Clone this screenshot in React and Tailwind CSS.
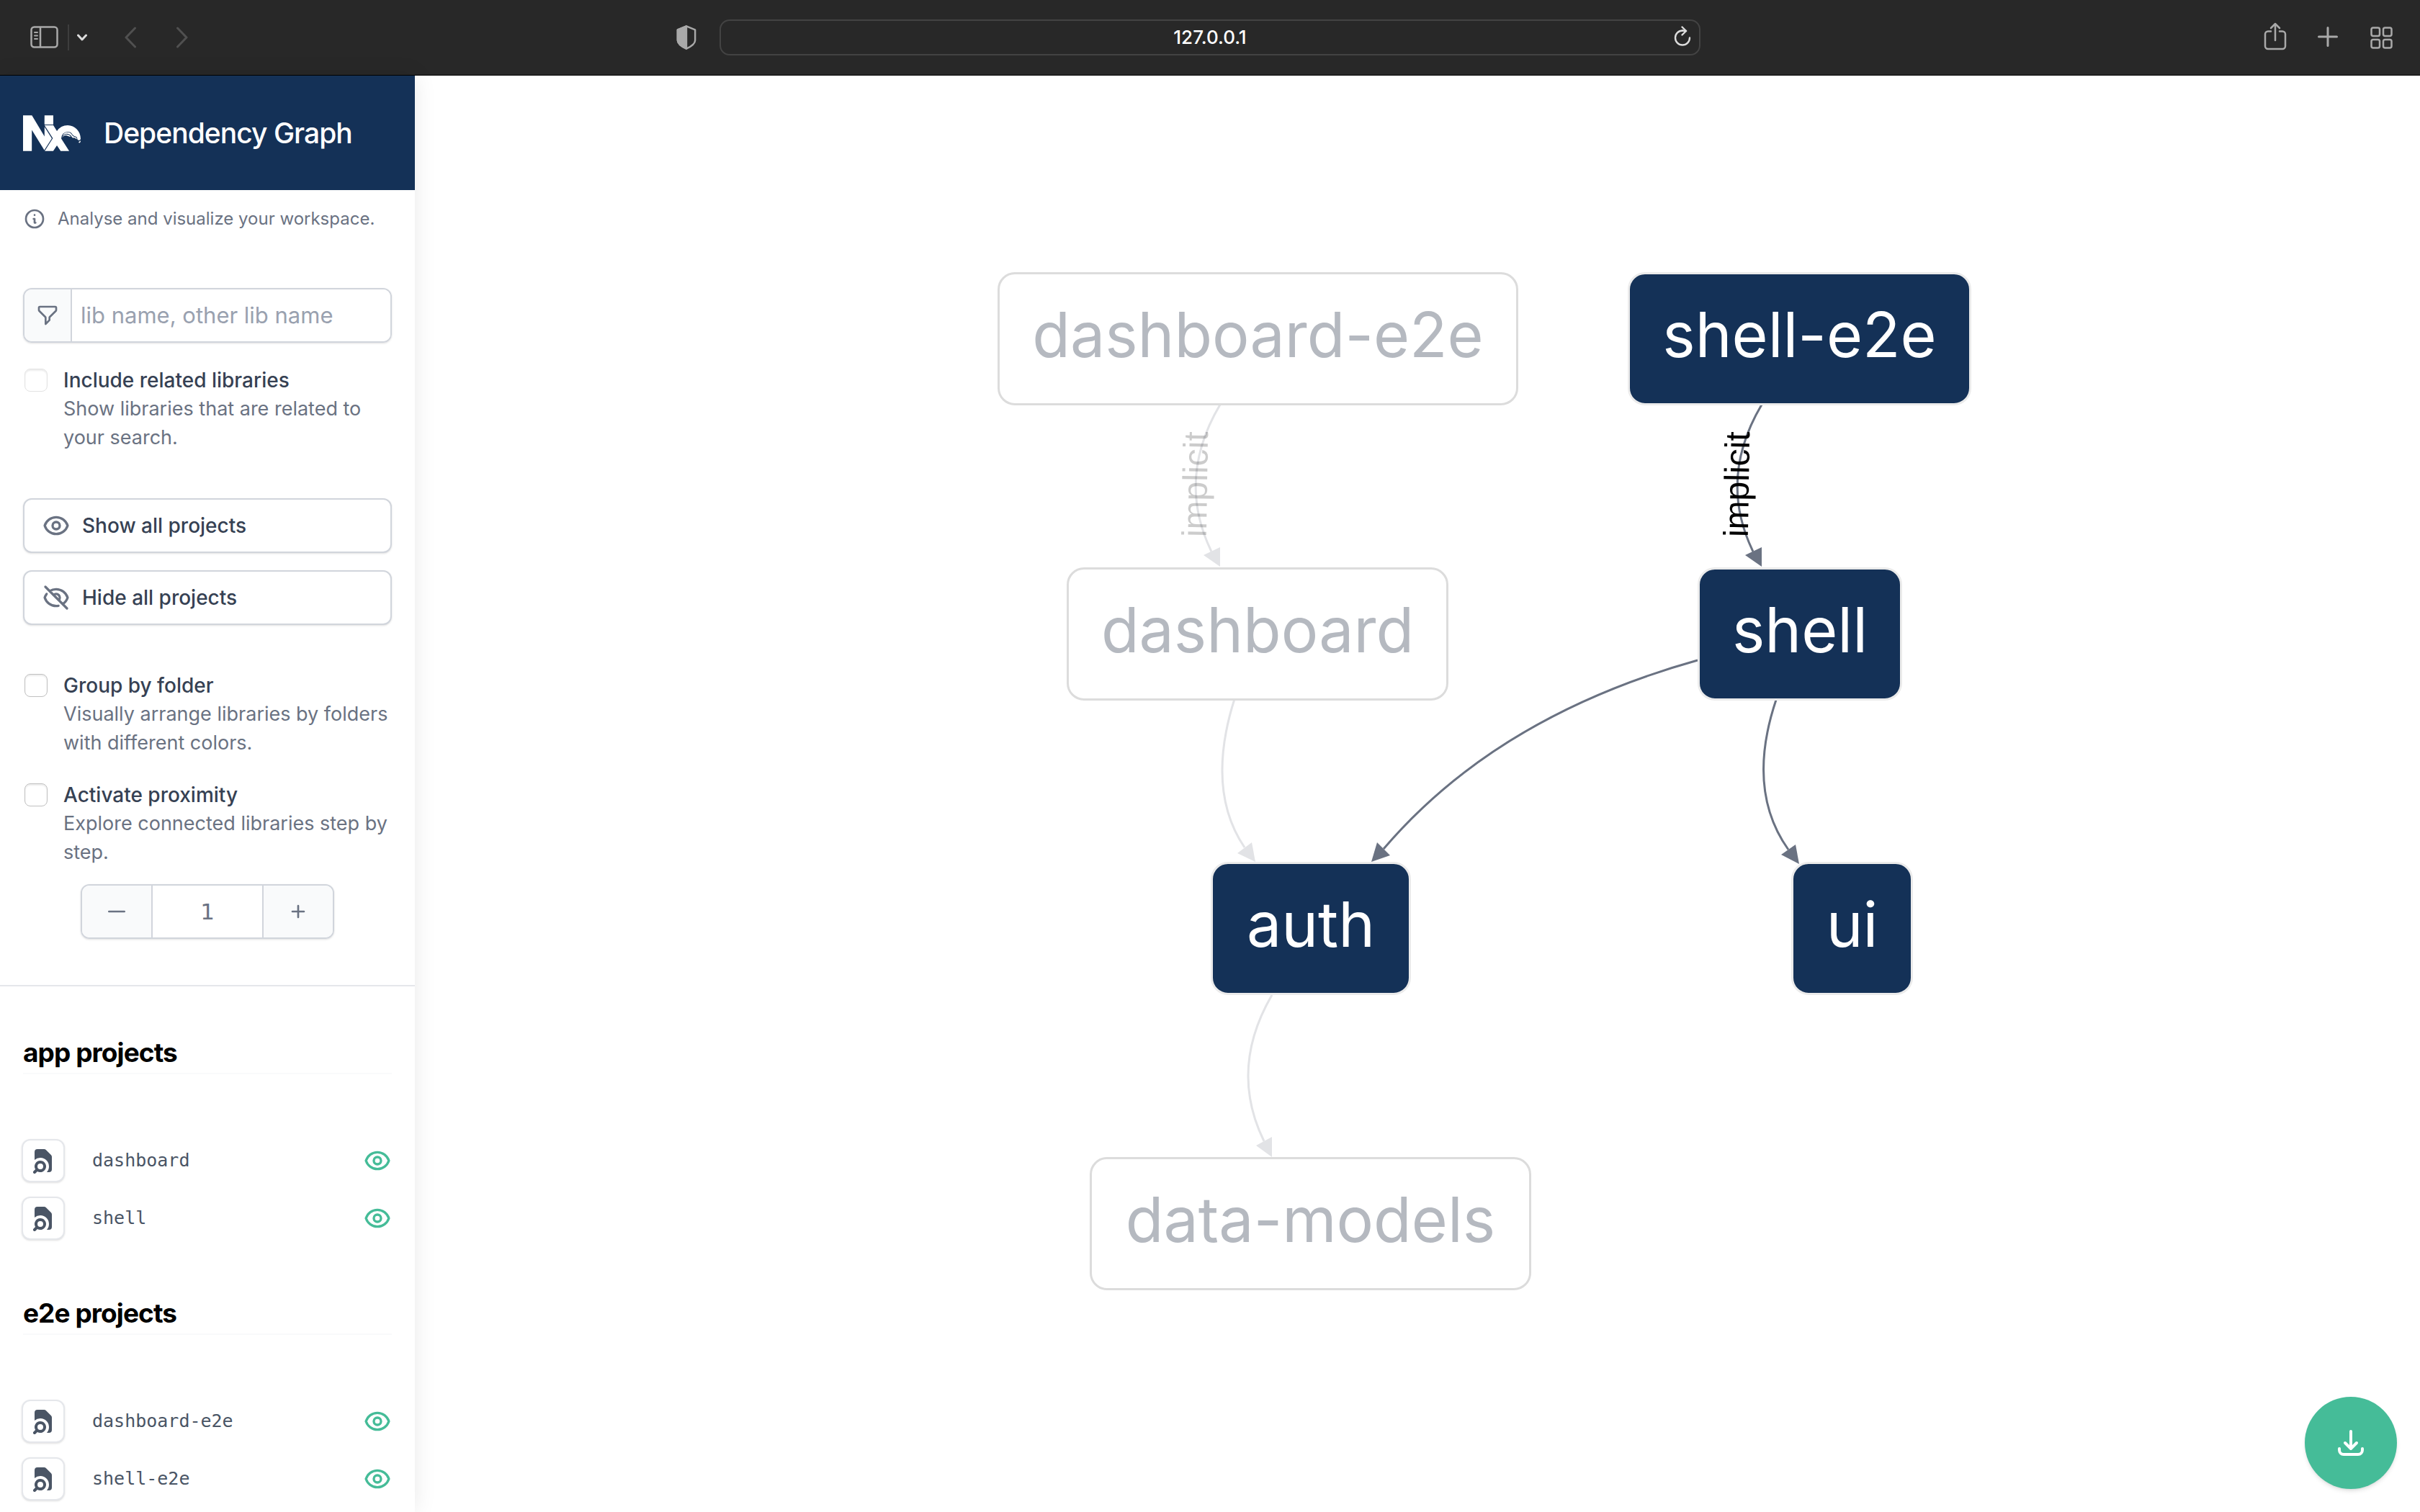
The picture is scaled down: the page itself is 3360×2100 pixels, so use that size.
import React from "react";

function Outline({ d, className, strokeWidth = 2 }) {
  return (
    <svg
      viewBox="0 0 24 24"
      fill="none"
      stroke="currentColor"
      strokeWidth={strokeWidth}
      strokeLinecap="round"
      strokeLinejoin="round"
      className={className}
      aria-hidden="true"
    >
      {d.map((p) => (
        <path key={p} d={p} />
      ))}
    </svg>
  );
}

const ICONS = {
  info: ["M13 16h-1v-4h-1m1-4h.01M21 12a9 9 0 11-18 0 9 9 0 0118 0z"],
  filter: [
    "M3 4a1 1 0 011-1h16a1 1 0 011 1v2.586a1 1 0 01-.293.707l-6.414 6.414a1 1 0 00-.293.707V17l-4 4v-6.586a1 1 0 00-.293-.707L3.293 7.293A1 1 0 013 6.586V4z",
  ],
  eye: [
    "M15 12a3 3 0 11-6 0 3 3 0 016 0z",
    "M2.458 12C3.732 7.943 7.523 5 12 5c4.478 0 8.268 2.943 9.542 7-1.274 4.057-5.064 7-9.542 7-4.477 0-8.268-2.943-9.542-7z",
  ],
  eyeOff: [
    "M13.875 18.825A10.05 10.05 0 0112 19c-4.478 0-8.268-2.943-9.543-7a9.97 9.97 0 011.563-3.029m5.858.908a3 3 0 114.243 4.243M9.878 9.878l4.242 4.242M9.88 9.88l-3.29-3.29m7.532 7.532l3.29 3.29M3 3l3.59 3.59m0 0A9.953 9.953 0 0112 5c4.478 0 8.268 2.943 9.543 7a10.025 10.025 0 01-4.132 5.411m0 0L21 21",
  ],
  minus: ["M20 12H4"],
  plus: ["M12 6v6m0 0v6m0-6h6m-6 0H6"],
  download: ["M4 16v1a3 3 0 003 3h10a3 3 0 003-3v-1m-4-4l-4 4m0 0l-4-4m4 4V4"],
};

function DocumentSearch({ className }) {
  return (
    <svg viewBox="0 0 20 20" fill="currentColor" className={className} aria-hidden="true">
      <path d="M4 4a2 2 0 012-2h4.586A2 2 0 0112 2.586L15.414 6A2 2 0 0116 7.414V16a2 2 0 01-2 2h-1.528A6 6 0 004 9.528V4z" />
      <path
        fillRule="evenodd"
        clipRule="evenodd"
        d="M8 10a4 4 0 00-3.446 6.032l-1.261 1.26a1 1 0 101.414 1.415l1.261-1.261A4 4 0 108 10zm-2 4a2 2 0 114 0 2 2 0 01-4 0z"
      />
    </svg>
  );
}

function NxLogo({ className }) {
  return (
    <svg viewBox="0 4.5 24 15" fill="currentColor" className={className} role="img" aria-label="Nx">
      <path d="m11.987 14.138-3.132 4.923-5.193-8.427-.012 8.822H0V4.544h3.691l5.247 8.833.005-3.998 3.044 4.759zm.601-5.761c.024-.048 0-3.784.008-3.833h-3.65c.002.059-.005 3.776-.003 3.833h3.645zm5.634 4.134a2.061 2.061 0 0 0-1.969 1.336 1.963 1.963 0 0 1 2.343-.739c.396.161.917.422 1.33.283a2.1 2.1 0 0 0-1.704-.88zm3.39 1.061c-.375-.13-.8-.277-1.109-.681-.06-.08-.116-.17-.176-.265a2.143 2.143 0 0 0-.533-.642c-.294-.216-.68-.322-1.18-.322a2.482 2.482 0 0 0-2.294 1.536 2.325 2.325 0 0 1 4.002.388.75.75 0 0 0 .836.334c.493-.105.46.36 1.203.518v-.133c-.003-.446-.246-.55-.75-.733zm2.024 1.266a.723.723 0 0 0 .347-.638c-.01-2.957-2.41-5.487-5.37-5.487a5.364 5.364 0 0 0-4.487 2.418c-.01-.026-1.522-2.39-1.538-2.418H8.943l3.463 5.423-3.379 5.32h3.54l1.54-2.366 1.568 2.366h3.541l-3.21-5.052a.7.7 0 0 1-.084-.32 2.69 2.69 0 0 1 2.69-2.691h.001c1.488 0 1.736.89 2.057 1.308.634.826 1.9.464 1.9 1.541a.707.707 0 0 0 1.066.596zm.35.133c-.173.372-.56.338-.755.639-.176.271.114.412.114.412s.337.156.538-.311c.104-.231.14-.488.103-.74z" />
    </svg>
  );
}

function Toolbar() {
  return (
    <header className="grid h-[105px] grid-cols-[1fr_minmax(0,1362px)_1fr] items-center border-b border-black bg-[#282828] text-[#a9a9a9]">
      <div className="flex items-center pr-8 pl-[42px]">
        <button type="button" aria-label="Show sidebar">
          <svg viewBox="0 0 40 32" className="h-8 w-10" fill="none" stroke="currentColor" strokeWidth="2.5">
            <rect x="1.5" y="1.5" width="36" height="28" rx="4" />
            <path d="M14 2v28" />
            <path d="M6 9h4M6 13.5h4M6 18h4" strokeWidth="2" strokeLinecap="round" />
          </svg>
        </button>
        <span className="ml-3 h-9 w-[2px] bg-[#3e3e3e]" />
        <button type="button" aria-label="Tab groups" className="ml-[11px] text-[#dcdcdc]">
          <svg viewBox="0 0 14 10" className="h-[10px] w-[14px]" fill="none" stroke="currentColor" strokeWidth="3" strokeLinecap="round" strokeLinejoin="round">
            <path d="M1.5 2l5.5 6 5.5-6" />
          </svg>
        </button>
        <button type="button" aria-label="Back" className="ml-[52px] text-[#505050]">
          <svg viewBox="0 0 16 30" className="h-[30px] w-4" fill="none" stroke="currentColor" strokeWidth="3" strokeLinecap="round" strokeLinejoin="round">
            <path d="M14.5 2L2 15l12.500 13" />
          </svg>
        </button>
        <button type="button" aria-label="Forward" className="ml-14 text-[#505050]">
          <svg viewBox="0 0 16 30" className="h-[30px] w-4" fill="none" stroke="currentColor" strokeWidth="3" strokeLinecap="round" strokeLinejoin="round">
            <path d="M1.5 2L14 15 1.5 28" />
          </svg>
        </button>
        <button type="button" aria-label="Privacy report" className="ml-auto">
          <svg viewBox="0 0 28 35" className="h-[34px] w-7" fill="none" stroke="currentColor" strokeWidth="2.5" strokeLinejoin="round">
            <path d="M14 1.5L26.5 6.5v15c0 5-5 8.5-12.5 12C6.5 30 1.5 26.5 1.5 21.5v-15z" />
            <path d="M14 1.5v32C6.5 30 1.5 26.5 1.5 21.5v-15z" fill="currentColor" />
          </svg>
        </button>
      </div>
      <div className="flex h-[50px] items-center rounded-[14px] border-2 border-[#434343] pr-[11px] pl-[35px]">
        <input
          aria-label="Address"
          defaultValue="127.0.0.1"
          className="min-w-0 flex-1 bg-transparent text-center text-[26px] leading-8 font-medium text-white outline-none"
        />
        <button type="button" aria-label="Reload" className="-mt-1 text-[#dcdcdc]">
          <svg viewBox="0 0 24 28" className="h-7 w-6" fill="none" stroke="currentColor" strokeWidth="2.4" strokeLinecap="round" strokeLinejoin="round">
            <path d="M12 6.5A10 10 0 1 0 22 16.5" />
            <path d="M11.5 1.5L17 7l-5.500 5.500" />
            <path d="M12 6.5c2 0 3.5.2 5 .5" />
          </svg>
        </button>
      </div>
      <div className="flex items-center justify-end pr-[38px]">
        <button type="button" aria-label="Share">
          <svg viewBox="0 0 32 42" className="h-[42px] w-8" fill="none" stroke="currentColor" strokeWidth="2.5" strokeLinecap="round" strokeLinejoin="round">
            <path d="M10 12.5H6a4 4 0 0 0-4 4V33a4 4 0 0 0 4 4h20a4 4 0 0 0 4-4V16.5a4 4 0 0 0-4-4h-4" />
            <path d="M16 25V2M10 8L16 2l6 6" />
          </svg>
        </button>
        <button type="button" aria-label="New tab" className="ml-[43px]">
          <svg viewBox="0 0 28 30" className="h-[30px] w-7" fill="none" stroke="currentColor" strokeWidth="3" strokeLinecap="round">
            <path d="M14 1.5v25M1.5 14h25" />
          </svg>
        </button>
        <button type="button" aria-label="Tab overview" className="ml-[45px]">
          <svg viewBox="0 0 31 31" className="size-[31px]" fill="none" stroke="currentColor" strokeWidth="2.5">
            <rect x="1.5" y="1.5" width="11.5" height="11.5" rx="2.5" />
            <rect x="18" y="1.5" width="11.5" height="11.5" rx="2.5" />
            <rect x="1.5" y="18" width="11.5" height="11.5" rx="2.5" />
            <rect x="18" y="18" width="11.5" height="11.5" rx="2.5" />
          </svg>
        </button>
      </div>
    </header>
  );
}

function CheckOption({ id, title, text, faded, className }) {
  return (
    <div className={"flex gap-[22px] pl-[2px] leading-10 " + className}>
      <input
        id={id}
        type="checkbox"
        className={
          "mt-1 size-8 shrink-0 appearance-none rounded-lg border bg-white shadow-[inset_0_2px_2px_rgba(0,0,0,0.08)] " +
          (faded ? "border-[#e3e3e3]" : "border-[#c0c0c0]")
        }
      />
      <div className="min-w-0 flex-1">
        <label htmlFor={id} className="block text-[28px] leading-10 font-medium text-gray-700">
          {title}
        </label>
        <p className="text-[27px] leading-10 text-gray-500">{text}</p>
      </div>
    </div>
  );
}

function WideButton({ icon, children }) {
  return (
    <button
      type="button"
      className="flex h-[76px] w-full items-center gap-4 rounded-xl border-2 border-gray-300 bg-white px-6 text-[28px] leading-10 font-medium text-gray-700 shadow-sm"
    >
      <Outline d={icon} className="size-10 text-gray-500" />
      {children}
    </button>
  );
}

function ProjectGroup({ title, projects }) {
  return (
    <section className="mt-16 px-8">
      <h2 className="border-b-2 border-gray-50 text-[37px] leading-[56px] font-bold tracking-tight text-black">{title}</h2>
      <ul className="mt-20">
        {projects.map((name) => (
          <li key={name} className="-ml-[2px] flex h-20 items-center">
            <button
              type="button"
              aria-label={"Focus " + name}
              className="flex size-[60px] items-center justify-center rounded-xl border-2 border-gray-200 bg-white text-gray-600 shadow-sm"
            >
              <DocumentSearch className="size-10" />
            </button>
            <span className="ml-[38px] font-['DejaVu_Sans_Mono',monospace] text-[25px] leading-8 text-gray-600">{name}</span>
            <button type="button" aria-label={"Hide " + name} className="ml-auto text-[#45bc98]">
              <Outline d={ICONS.eye} className="size-10" />
            </button>
          </li>
        ))}
      </ul>
    </section>
  );
}

function Sidebar() {
  return (
    <aside className="z-10 w-[576px] shrink-0 overflow-hidden bg-white shadow-[0_0_30px_rgba(0,0,0,0.09)]">
      <div className="flex h-[159px] items-center gap-8 bg-[#143157] px-8 text-white">
        <NxLogo className="h-[50px] w-20" />
        <h1 className="text-[39px] leading-[56px] font-medium tracking-tight">Dependency Graph</h1>
      </div>
      <p className="mt-6 flex items-center gap-4 px-8 text-[24px] leading-8 text-gray-500">
        <Outline d={ICONS.info} className="size-8" />
        Analyse and visualize your workspace.
      </p>
      <div className="mt-20 px-8">
        <div className="flex h-[76px] overflow-hidden rounded-xl border-2 border-gray-300 shadow-sm">
          <span className="flex w-[66px] items-center justify-center border-r-2 border-gray-300 bg-gray-50 text-gray-500">
            <Outline d={ICONS.filter} className="size-8" />
          </span>
          <input
            type="text"
            aria-label="Filter projects"
            placeholder="lib name, other lib name"
            className="min-w-0 flex-1 bg-white px-3 text-[31px] outline-none placeholder:text-gray-400"
          />
        </div>
        <CheckOption
          id="include"
          title="Include related libraries"
          text="Show libraries that are related to your search."
          faded
          className="mt-8"
        />
        <div className="mt-16 flex flex-col gap-6">
          <WideButton icon={ICONS.eye}>Show all projects</WideButton>
          <WideButton icon={ICONS.eyeOff}>Hide all projects</WideButton>
        </div>
        <CheckOption
          id="group"
          title="Group by folder"
          text="Visually arrange libraries by folders with different colors."
          className="mt-16"
        />
        <CheckOption
          id="proximity"
          title="Activate proximity"
          text="Explore connected libraries step by step."
          className="mt-8"
        />
        <div className="mx-auto mt-6 flex h-[76px] w-[352px] overflow-hidden rounded-xl border-2 border-gray-300 text-gray-500 shadow-sm">
          <button type="button" aria-label="Remove one step" className="flex w-[98px] items-center justify-center border-r-2 border-gray-300 bg-gray-50">
            <Outline d={ICONS.minus} className="size-8" />
          </button>
          <input
            aria-label="Proximity depth"
            defaultValue="1"
            className="min-w-0 flex-1 bg-white text-center font-['DejaVu_Sans',sans-serif] text-[31px] outline-none"
          />
          <button type="button" aria-label="Add one step" className="flex w-[98px] items-center justify-center border-l-2 border-gray-300 bg-gray-50">
            <Outline d={ICONS.plus} className="size-8" />
          </button>
        </div>
      </div>
      <hr className="mt-16 border-t-2 border-gray-200" />
      <ProjectGroup title="app projects" projects={["dashboard", "shell"]} />
      <ProjectGroup title="e2e projects" projects={["dashboard-e2e", "shell-e2e"]} />
    </aside>
  );
}

const NODES = [
  { name: "dashboard-e2e", place: "left-[809px] top-[273px] w-[723px]" },
  { name: "shell-e2e", active: true, place: "left-[1684px] top-[273px] w-[477px]" },
  { name: "dashboard", place: "left-[905px] top-[683px] w-[530px]" },
  { name: "shell", active: true, place: "left-[1781px] top-[683px] w-[284px]" },
  { name: "auth", active: true, place: "left-[1105px] top-[1092px] w-[278px]" },
  { name: "ui", active: true, place: "left-[1911px] top-[1092px] w-[169px]" },
  { name: "data-models", place: "left-[937px] top-[1502px] w-[613px]" },
];

const EDGES = [
  { line: "M1694 562Q1633 665 1682 766", head: "1694,787 1671,771 1694,760" },
  { line: "M2446 562Q2385 665 2434 766", head: "2446,787 2423,771 2446,760", active: true },
  { line: "M1714 971Q1674 1097 1728 1177", head: "1743,1197 1718,1185 1738,1170" },
  { line: "M2357 917Q2078 995 1921 1179", head: "1904,1197 1912,1170 1930,1188", active: true },
  { line: "M2466 972Q2424 1097 2483 1180", head: "2498,1200 2473,1187 2493,1173", active: true },
  { line: "M1766 1382Q1706 1485 1755 1585", head: "1766,1607 1744,1591 1766,1579" },
];

function Graph() {
  return (
    <main className="relative min-w-0 flex-1 overflow-hidden bg-white">
      <svg viewBox="576 105 2784 1995" className="absolute top-0 left-0 h-[1995px] w-[2784px]" aria-hidden="true">
        {EDGES.map((e) => (
          <g key={e.line} className={e.active ? "text-gray-500" : "text-[#e2e3e6]"}>
            <path d={e.line} fill="none" stroke="currentColor" strokeWidth="3" />
            <polygon points={e.head} fill="currentColor" />
          </g>
        ))}
        <g fontFamily="'Liberation Sans', sans-serif" fontSize="48" textAnchor="middle">
          <text transform="translate(1676 673) rotate(-89)" fillOpacity="0.2">
            implicit
          </text>
          <text transform="translate(2428 673) rotate(-89)">implicit</text>
        </g>
      </svg>
      {NODES.map((n) => (
        <div
          key={n.name}
          className={
            "absolute flex h-[185px] items-center justify-center rounded-3xl border-[3px] pb-3 text-[86px] leading-none whitespace-nowrap " +
            (n.active ? "border-[#ebebeb] bg-[#143157] text-white " : "border-[#dcdcdc] bg-white text-[#b5b9c0] ") +
            n.place
          }
        >
          {n.name}
        </div>
      ))}
      <button
        type="button"
        aria-label="Download image"
        className="absolute right-8 bottom-8 flex size-32 items-center justify-center rounded-full bg-[#45bc98] text-white shadow-md"
      >
        <Outline d={ICONS.download} className="size-12" />
      </button>
    </main>
  );
}

export default function App() {
  return (
    <div className="flex h-screen flex-col bg-white font-['Inter',sans-serif]">
      <Toolbar />
      <div className="flex min-h-0 flex-1">
        <Sidebar />
        <Graph />
      </div>
    </div>
  );
}
